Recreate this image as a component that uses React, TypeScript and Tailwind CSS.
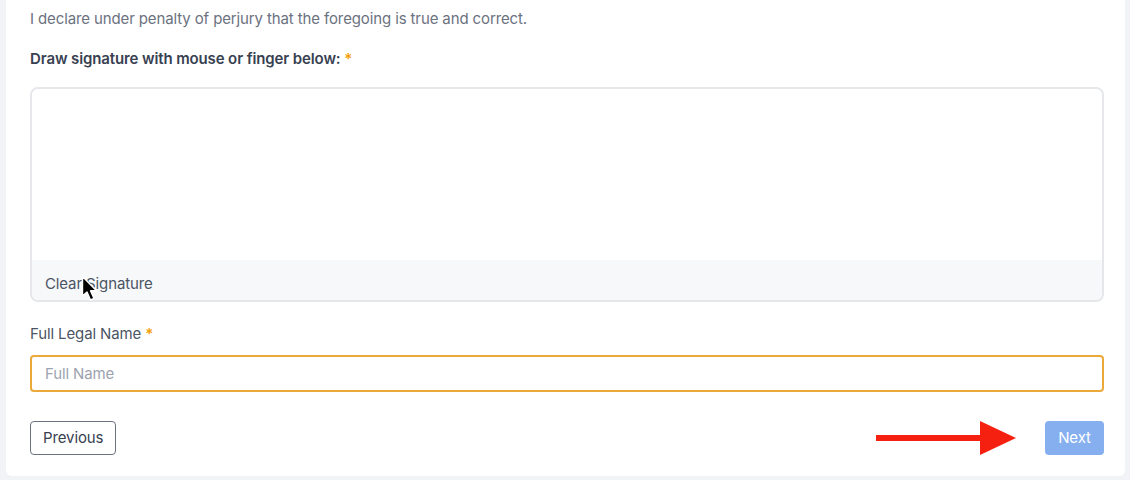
import React from "react";

export default function App() {
  return (
    <div
      className="w-[1130px] h-[480px] bg-[#f2f3f6] pl-[6px] pr-[5px] pb-[4px] overflow-hidden"
      style={{ fontFamily: "Inter, 'Liberation Sans', sans-serif" }}
    >
      <div className="relative h-full bg-white rounded-b-[6px] pl-[24px] pr-[21px] pt-[7px] flex flex-col tracking-[-0.12px]">
        <p className="text-[15px] leading-[24px] text-[#6b7280]">
          I declare under penalty of perjury that the foregoing is true and correct.
        </p>
        <p className="mt-[16px] text-[15px] leading-[24px] font-semibold text-[#374151]">
          Draw signature with mouse or finger below: <span className="text-[#f59e0b]">*</span>
        </p>
        <div className="mt-[16px] h-[215px] rounded-[8px] border-2 border-[#e5e7eb] overflow-hidden flex flex-col">
          <div className="flex-1 bg-white" />
          <div className="h-[40px] bg-[#f7f8fa] pl-[13px] pt-[12px] text-[15px] leading-[24px] text-[#4b5563]">
            Clear Signature
          </div>
        </div>
        <p className="mt-[20px] text-[15px] leading-[24px] text-[#4b5563]">
          Full Legal Name <span className="text-[#f59e0b] font-semibold">*</span>
        </p>
        <input
          className="mt-[9px] h-[37px] w-full rounded-[4px] border-2 border-[#eba93a] px-[13px] text-[15px] text-[#374151] placeholder:text-[#9ca3af] outline-none"
          placeholder="Full Name"
        />
        <div className="mt-[29px] flex items-center justify-between">
          <button className="h-[34px] px-[12px] rounded-[4px] border border-[#6b7280] bg-white text-[15px] text-[#374151]">
            Previous
          </button>
          <div className="flex items-center gap-[29px]">
            <svg width="140" height="34" viewBox="0 0 140 34">
              <rect x="0" y="14" width="106" height="6" fill="#f5200f" />
              <polygon points="104,0 140,17 104,34" fill="#f5200f" />
            </svg>
            <button className="h-[34px] w-[59px] rounded-[4px] bg-[#86aff0] text-[15px] text-white">
              Next
            </button>
          </div>
        </div>
        <svg
          className="absolute left-[75px] top-[275px]"
          width="20"
          height="28"
          viewBox="0 0 20 28"
        >
          <path
            d="M1.5 1.5 L1.5 21 L6 17 L9.5 25 L13 23.5 L9.5 15.8 L15.5 15.8 Z"
            fill="#000"
            stroke="#fff"
            strokeWidth="1.4"
            strokeLinejoin="round"
          />
        </svg>
      </div>
    </div>
  );
}
